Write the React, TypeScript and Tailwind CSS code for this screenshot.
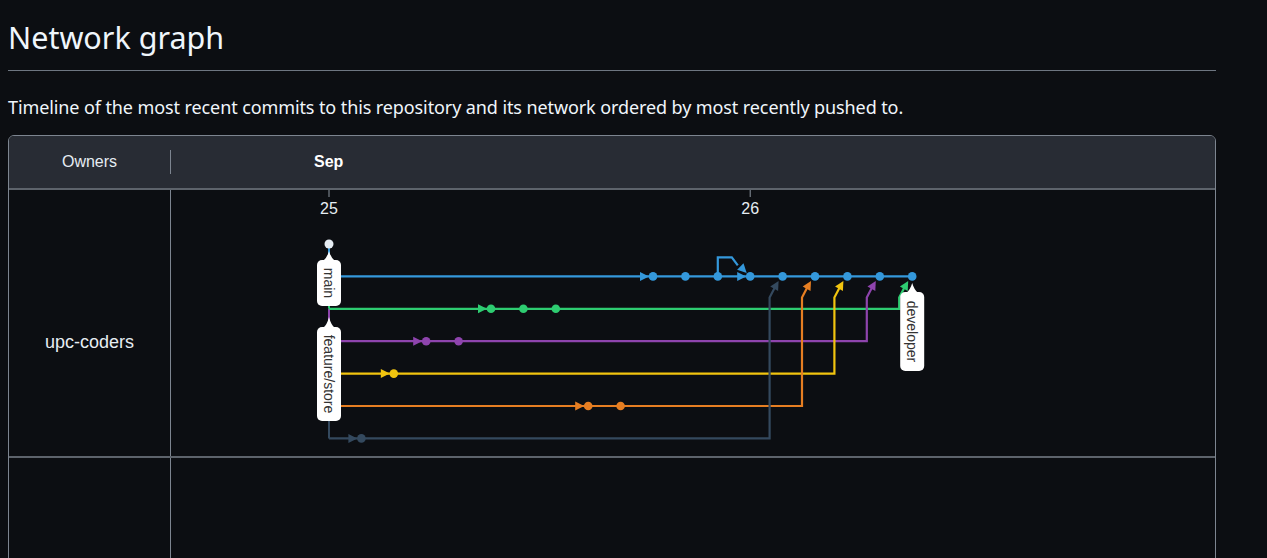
import React from 'react';

const COL0 = 329;
const ROW0 = 244;
const STEP = 32.4;

const X = (k: number) => COL0 + k * STEP;
const Y = (r: number) => ROW0 + r * STEP;

const BLUE = '#3498db';
const GREEN = '#2ecc71';
const PURPLE = '#8e44ad';
const YELLOW = '#f1c40f';
const ORANGE = '#e67e22';
const SLATE = '#34495e';

// arrow head, tip at (x, y), pointing along (dx, dy)
const Arrow: React.FC<{ x: number; y: number; dx: number; dy: number; color: string }> = ({ x, y, dx, dy, color }) => {
  const len = Math.hypot(dx, dy);
  const ux = dx / len;
  const uy = dy / len;
  const bx = x - ux * 9;
  const by = y - uy * 9;
  const px = -uy * 4.5;
  const py = ux * 4.5;
  return <polygon points={`${x},${y} ${bx + px},${by + py} ${bx - px},${by - py}`} fill={color} />;
};

interface Branch {
  color: string;
  row: number;
  arrowAt: number;
  commits: number[];
  mergeInto?: number;
}

const branches: Branch[] = [
  { color: GREEN, row: 2, arrowAt: 5, commits: [5, 6, 7], mergeInto: 18 },
  { color: PURPLE, row: 3, arrowAt: 3, commits: [3, 4], mergeInto: 17 },
  { color: YELLOW, row: 4, arrowAt: 2, commits: [2], mergeInto: 16 },
  { color: ORANGE, row: 5, arrowAt: 8, commits: [8, 9], mergeInto: 15 },
  { color: SLATE, row: 6, arrowAt: 1, commits: [1], mergeInto: 14 },
];

const mainCommits = [10, 11, 12, 13, 14, 15, 16, 17, 18];

const Label: React.FC<{ cx: number; tip: number; top: number; bottom: number; text: string }> = ({ cx, tip, top, bottom, text }) => (
  <g>
    <path d={`M${cx - 6},${top + 1} Q${cx - 2},${top - 2} ${cx},${tip} Q${cx + 2},${top - 2} ${cx + 6},${top + 1} Z`} fill="#ffffff" />
    <rect x={cx - 12} y={top} width={24} height={bottom - top} rx={5} fill="#ffffff" />
    <text
      x={cx}
      y={(top + bottom) / 2}
      transform={`rotate(90 ${cx} ${(top + bottom) / 2})`}
      textAnchor="middle"
      dominantBaseline="central"
      fontSize={14}
      fill="#333333"
      fontFamily='"Liberation Sans", Arial, sans-serif'
    >
      {text}
    </text>
  </g>
);

const Graph: React.FC = () => {
  const mainY = Y(1);
  return (
    <svg width={1044} height={266} className="block">
      <g transform="translate(-171 -190)">
        {/* date ticks */}
        <line x1={X(0)} y1={190} x2={X(0)} y2={197} stroke="#8b949e" strokeWidth={1} />
        <line x1={X(13)} y1={190} x2={X(13)} y2={197} stroke="#8b949e" strokeWidth={1} />
        <text x={X(0)} y={214} textAnchor="middle" fontSize={16} fill="#e6edf3" fontFamily='"Liberation Sans", Arial, sans-serif'>25</text>
        <text x={X(13)} y={214} textAnchor="middle" fontSize={16} fill="#e6edf3" fontFamily='"Liberation Sans", Arial, sans-serif'>26</text>

        {/* trunk */}
        <line x1={X(0)} y1={Y(0)} x2={X(0)} y2={Y(1)} stroke={BLUE} strokeWidth={2} />
        {branches.map((b) => (
          <line key={'t' + b.row} x1={X(0)} y1={Y(b.row - 1)} x2={X(0)} y2={Y(b.row)} stroke={b.color} strokeWidth={2} />
        ))}

        {/* side branches */}
        {branches.map((b) => {
          const y = Y(b.row);
          const target = X(b.mergeInto!);
          const vx = target - 13;
          const tipX = target - 4;
          const tipY = mainY + 4.5;
          return (
            <g key={b.row}>
              <path
                d={`M${X(0)},${y} L${vx},${y} L${vx},${mainY + 21} L${tipX - 3},${tipY + 5}`}
                fill="none"
                stroke={b.color}
                strokeWidth={2.2}
              />
              <Arrow x={tipX} y={tipY} dx={9} dy={-16} color={b.color} />
              <Arrow x={X(b.arrowAt) - 4} y={y} dx={1} dy={0} color={b.color} />
              {b.commits.map((c) => (
                <circle key={c} cx={X(c)} cy={y} r={4.3} fill={b.color} />
              ))}
            </g>
          );
        })}

        {/* main line */}
        <line x1={X(0)} y1={mainY} x2={X(18)} y2={mainY} stroke={BLUE} strokeWidth={2.2} />
        <Arrow x={X(10) - 4} y={mainY} dx={1} dy={0} color={BLUE} />
        <Arrow x={X(13) - 4} y={mainY} dx={1} dy={0} color={BLUE} />
        <path
          d={`M${X(12)},${mainY} L${X(12)},${mainY - 19} L${X(12) + 14},${mainY - 19} L${X(12) + 20},${mainY - 11}`}
          fill="none"
          stroke={BLUE}
          strokeWidth={2.2}
        />
        <Arrow x={X(13) - 3.5} y={mainY - 3.5} dx={1} dy={1} color={BLUE} />
        {mainCommits.map((c) => (
          <circle key={c} cx={X(c)} cy={mainY} r={4.3} fill={BLUE} />
        ))}

        <circle cx={X(0)} cy={Y(0)} r={4.5} fill="#e6edf3" />

        <Label cx={X(0)} tip={251} top={260} bottom={306} text="main" />
        <Label cx={X(0)} tip={317} top={327} bottom={421} text="feature/store" />
        <Label cx={X(18)} tip={283} top={292} bottom={371} text="developer" />
      </g>
    </svg>
  );
};

export default function App() {
  return (
    <div className="min-h-screen bg-[#0c0e12] px-2 pt-[13px]" style={{ fontFamily: '"Noto Sans", "Open Sans", sans-serif' }}>
      <div className="w-[1208px]">
        <h2 className="text-[30.5px] leading-[48px] font-normal text-[#f0f6fc] pb-[9px] border-b border-[#6e7681]">Network graph</h2>
        <p className="mt-[24px] text-[18px] leading-[24px] text-[#f0f6fc] tracking-[-0.1px]">
          Timeline of the most recent commits to this repository and its network ordered by most recently pushed to.
        </p>

        <div
          className="mt-[16px] border border-[#7d8590] rounded-t-md overflow-hidden"
          style={{ fontFamily: '"Liberation Sans", Arial, sans-serif' }}
        >
          <div className="flex h-[54px] bg-[#282c34] border-b-2 border-[#5d636b]">
            <div className="w-[162px] flex items-center justify-center text-[16px] text-[#e6edf3] border-r border-[#7d8590] my-[14px]">
              Owners
            </div>
            <div className="flex-1 flex items-center pl-[143px] text-[16px] font-bold text-[#ffffff]">Sep</div>
          </div>

          <div className="flex h-[268px] border-b-2 border-[#5d636b]">
            <div className="w-[162px] pt-[139px] text-center text-[18px] leading-[26px] text-[#e6edf3] border-r border-[#7d8590]">
              upc-coders
            </div>
            <div className="flex-1 overflow-hidden">
              <Graph />
            </div>
          </div>

          <div className="flex h-[120px]">
            <div className="w-[162px] border-r border-[#7d8590]" />
            <div className="flex-1" />
          </div>
        </div>
      </div>
    </div>
  );
}
